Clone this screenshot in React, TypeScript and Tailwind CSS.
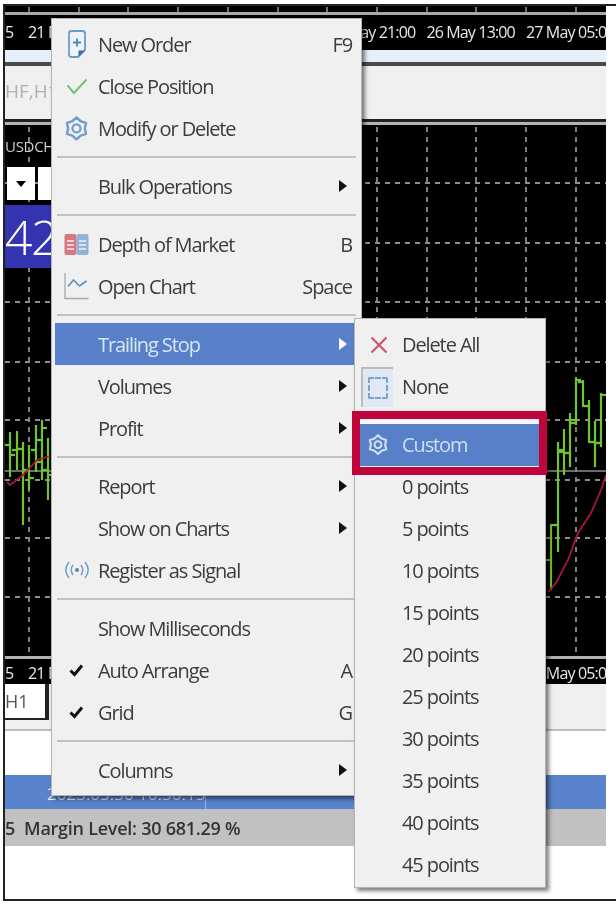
import type { ReactNode } from 'react'

const gridX = [29, 79, 128, 178, 228, 278, 327, 377, 427, 476, 526, 576]
const gridY = [183, 243, 302, 362, 420, 480, 538, 597]

// [x, top, bottom, open, close]
const bars = [
  [10, 432, 477, 445, 455],
  [17, 431, 470, 450, 449],
  [23, 442, 525, 449, 470],
  [29, 445, 490, 470, 478],
  [36, 425, 472, 450, 440],
  [42, 420, 480, 462, 428],
  [48, 438, 500, 470, 475],
  [551, 524, 590, 560, 525],
  [558, 442, 552, 525, 450],
  [564, 429, 475, 452, 453],
  [570, 413, 467, 453, 420],
  [576, 377, 425, 423, 380],
  [583, 380, 407, 382, 406],
  [589, 400, 443, 406, 442],
  [595, 421, 467, 442, 443],
  [601, 393, 447, 443, 395],
]

function Chart() {
  return (
    <svg viewBox="5 125 601 531" className="block h-full w-full">
      <rect x="5" y="125" width="601" height="531" fill="#000" />
      {gridX.map((x) => (
        <line key={x} x1={x} y1="127" x2={x} y2="656" stroke="#8d8d8d" strokeWidth="1.800" strokeDasharray="5 5" />
      ))}
      {gridY.map((y) => (
        <line key={y} x1="5" y1={y} x2="606" y2={y} stroke="#8d8d8d" strokeWidth="1.800" strokeDasharray="5 5" />
      ))}
      <line x1="5" y1="471" x2="606" y2="471" stroke="#8a8f96" strokeWidth="1.500" />
      {bars.map(([x, top, bottom, open, close]) => (
        <g key={x} stroke="#6fc42f" strokeWidth="2.200">
          <line x1={x} y1={top} x2={x} y2={bottom} />
          <line x1={x - 5} y1={open} x2={x} y2={open} />
          <line x1={x} y1={close} x2={x + 5} y2={close} />
        </g>
      ))}
      <polyline points="7,482 10,485 23,475 37,460 50,456" fill="none" stroke="#a8163a" strokeWidth="1.800" />
      <polyline points="548,592 556,583 568,560 578,533 591,513 601,490 606,475" fill="none" stroke="#a8163a" strokeWidth="1.800" />
    </svg>
  )
}

function TickStrip() {
  return (
    <svg viewBox="5 6 601 6" className="block h-[6px] w-[601px]">
      <rect x="5" y="6" width="601" height="6" fill="#000" />
      {gridX.map((x) => (
        <line key={x} x1={x} y1="7" x2={x} y2="12" stroke="#9a9a9a" strokeWidth="1.500" />
      ))}
    </svg>
  )
}

function TimeAxis({ className }: { className: string }) {
  return (
    <div className={`flex overflow-hidden bg-black font-['Open_Sans',sans-serif] text-[16px] leading-[20px] tracking-[-0.85px] whitespace-nowrap text-[#e8e8e8] ${className}`}>
      <span className="w-[23px] shrink-0">5</span>
      {['21 May 05:00', '24 May 13:00', '25 May 05:00', '25 May 21:00', '26 May 13:00', '27 May 05:00'].map((label) => (
        <span key={label} className="w-[99.6px] shrink-0">{label}</span>
      ))}
    </div>
  )
}

function NewOrderIcon() {
  return (
    <svg width="20" height="30" viewBox="0 0 20 30" fill="none">
      <path d="M2 4.500a2.500 2.500 0 0 1 2.500-2.500h11a2.500 2.500 0 0 1 2.500 2.500V21l-7 7H4.500a2.500 2.500 0 0 1-2.500-2.500Z" fill="#eef3fa" stroke="#6e9ac7" strokeWidth="1.800" />
      <path d="M18 21.500 11.500 28v-6.500Z" fill="#3e6fa8" />
      <path d="M10 9.500v8M6 13.500h8" stroke="#4f86bd" strokeWidth="1.800" />
    </svg>
  )
}

function CheckIcon() {
  return (
    <svg width="22" height="17" viewBox="0 0 22 17" fill="none">
      <path d="M1.500 7.500 8 15 20.500 1.500" stroke="#72c27b" strokeWidth="2" />
    </svg>
  )
}

function GearIcon({ color, size = 22 }: { color: string; size?: number }) {
  return (
    <svg width={size} height={(size * 26) / 22} viewBox="0 0 22 26" fill="none" className="overflow-visible">
      <path
        d="M11 1.500 15.350 5.470 21 7.250 19.700 13 21 18.750 15.350 20.530 11 24.500 6.650 20.530 1 18.750 2.300 13 1 7.250 6.650 5.470Z"
        stroke={color}
        strokeWidth="2.600"
        strokeLinejoin="round"
      />
      <circle cx="11" cy="13" r="4.200" stroke={color} strokeWidth="2.400" />
    </svg>
  )
}

function DepthIcon() {
  return (
    <svg width="25" height="23" viewBox="0 0 25 23">
      <rect x="0.500" y="1" width="12" height="21" rx="2" fill="#d9757f" />
      <rect x="12.500" y="1" width="12" height="21" rx="2" fill="#8fb4d6" />
      <path d="M3 8h7M3 12h7M3 16h7M15 8h7M15 12h7M15 16h7" stroke="#f4f4f4" strokeWidth="1.700" />
    </svg>
  )
}

function OpenChartIcon() {
  return (
    <svg width="25" height="28" viewBox="0 0 25 28" fill="none">
      <path d="M1 1v25.500h23.500" stroke="#a9a9a9" strokeWidth="1.300" />
      <path d="M4 14.500 9.500 8l6 6 7-5" stroke="#5f93c4" strokeWidth="1.700" />
    </svg>
  )
}

function SignalIcon() {
  return (
    <svg width="26" height="20" viewBox="0 0 26 20" fill="none" stroke="#6f9fca" strokeWidth="1.500">
      <path d="M5 2C1 7 1 13 5 18M21 2c4 5 4 11 0 16M9 5c-2.500 3.500-2.500 6.500 0 10M17 5c2.500 3.500 2.500 6.500 0 10" />
      <circle cx="13" cy="10" r="2" fill="#4f86bd" stroke="none" />
    </svg>
  )
}

function TickIcon() {
  return (
    <svg width="15" height="14" viewBox="0 0 15 14" fill="none">
      <path d="M1.500 7.500 5.500 11.500 13 2.500" stroke="#111" strokeWidth="3" />
    </svg>
  )
}

function CrossIcon() {
  return (
    <svg width="18" height="18" viewBox="0 0 18 18" fill="none">
      <path d="M1.500 1.500 16.500 16.500M16.500 1.500 1.500 16.500" stroke="#c9586a" strokeWidth="2.200" />
    </svg>
  )
}

function Arrow({ white }: { white?: boolean }) {
  return (
    <span className={`h-0 w-0 border-y-[6.500px] border-l-[8px] border-y-transparent ${white ? 'border-l-white' : 'border-l-[#111]'}`} />
  )
}

function Separator() {
  return (
    <div className="flex h-[16px] items-center px-[5px]">
      <div className="h-[2px] w-full bg-[#c2c2c2]" />
    </div>
  )
}

function Row({
  label,
  icon,
  shortcut,
  arrow,
  active,
}: {
  label: string
  icon?: ReactNode
  shortcut?: string
  arrow?: boolean
  active?: boolean
}) {
  return (
    <div className={`mx-[3px] flex h-[42px] items-center ${active ? 'bg-[#5880c8] text-[#d8e5f6]' : ''}`}>
      <span className="flex w-[43px] shrink-0 justify-center">{icon}</span>
      <span className="flex-1 pt-[1px]">{label}</span>
      {shortcut && <span className="pt-[1px] pr-[6px]">{shortcut}</span>}
      {arrow && <span className="flex pr-[11px]"><Arrow white={active} /></span>}
    </div>
  )
}

const points = ['0', '5', '10', '15', '20', '25', '30', '35', '40', '45']

export default function App() {
  return (
    <div className="relative h-[904px] w-[616px] overflow-hidden bg-white pt-[4px] pb-[3px] pl-[3px] blur-[0.7px]">
      <div className="flex h-full flex-col border-y-2 border-l-2 border-[#222]">
        <TickStrip />
        <div className="h-[3px] w-[601px] bg-[#a9a9a9]" />
        <TimeAxis className="h-[35px] w-[601px] pt-[7px]" />
        <div className="h-[12px] w-[601px] bg-[#e6f0fb]" />
        <div className="h-[4px] w-[601px] bg-[#4a4a4a]" />
        <div className="flex h-[53px] w-[601px] items-center bg-[#f0f0f0] pb-[2px] font-['Open_Sans',sans-serif] text-[19px] text-[#b0b0b0]">HF,H1</div>
        <div className="h-[3px] w-[601px] bg-[#222]" />
        <div className="h-[3px] w-[601px] bg-[#b5b5b5]" />
        <div className="relative h-[531px] w-[601px]">
          <Chart />
          <div className="absolute top-[10px] left-0 font-['Open_Sans',sans-serif] text-[15px] tracking-[-0.3px] text-[#d0d0d0]">USDCH</div>
          <div className="absolute top-[42px] left-[2px] flex h-[33px] w-[44px] gap-[3px]">
            <div className="flex w-[28px] items-center justify-center bg-white">
              <span className="h-0 w-0 border-x-[5px] border-t-[6px] border-x-transparent border-t-black" />
            </div>
            <div className="flex-1 bg-white" />
          </div>
          <div className="absolute top-[80px] left-0 flex h-[63px] w-[46px] items-center bg-[#3433b0] font-['Open_Sans',sans-serif] text-[48px] font-light tracking-[-1.500px] text-white">42</div>
        </div>
        <div className="h-[3px] w-[601px] bg-[#b0b0b0]" />
        <TimeAxis className="h-[25px] w-[601px] pt-[4px]" />
        <div className="flex h-[45px] w-[601px] items-start bg-[#f0f0f0]">
          <div className="flex h-[36px] w-[42px] items-center border-r-2 border-b-2 border-[#222] bg-white font-['Open_Sans',sans-serif] text-[18px] text-[#555]">H1</div>
          <div className="h-[36px] w-[3px] border-l-2 border-[#222]" />
        </div>
        <div className="h-[2px] w-[601px] bg-[#bdbdbd]" />
        <div className="h-[44px]" />
        <div className="flex h-[34px] w-[601px] bg-[#5a83cd]">
          <div className="w-[200px] pt-[7px] pl-[42px] font-['Open_Sans',sans-serif] text-[17px] leading-[24px] whitespace-nowrap text-[#dfe9f7]">2023.05.30 10:30:15</div>
          <div className="w-px bg-[#9cb6e0]" />
        </div>
        <div className="flex h-[37px] w-[601px] items-center gap-[9px] bg-[#c1c1c1] pt-[2px] font-['Open_Sans',sans-serif] text-[18px] font-semibold tracking-[-0.25px] text-[#333]">
          <span>5</span>
          <span>Margin Level: 30 681.29 %</span>
        </div>
      </div>

      <div className="absolute top-[18px] left-[51px] h-[778px] w-[311px] border border-[#b4b4b4] bg-[#f0f0f0] pt-[4px] font-['Open_Sans',sans-serif] text-[20px] tracking-[-1.100px] text-[#3c3c3c] shadow-[3px_3px_4px_rgba(0,0,0,0.5)]">
        <Row label="New Order" icon={<NewOrderIcon />} shortcut="F9" />
        <Row label="Close Position" icon={<CheckIcon />} />
        <Row label="Modify or Delete" icon={<GearIcon color="#6f9fca" size={21} />} />
        <Separator />
        <Row label="Bulk Operations" arrow />
        <Separator />
        <Row label="Depth of Market" icon={<DepthIcon />} shortcut="B" />
        <Row label="Open Chart" icon={<OpenChartIcon />} shortcut="Space" />
        <Separator />
        <Row label="Trailing Stop" arrow active />
        <Row label="Volumes" arrow />
        <Row label="Profit" arrow />
        <Separator />
        <Row label="Report" arrow />
        <Row label="Show on Charts" arrow />
        <Row label="Register as Signal" icon={<SignalIcon />} />
        <Separator />
        <Row label="Show Milliseconds" />
        <Row label="Auto Arrange" icon={<TickIcon />} shortcut="A" />
        <Row label="Grid" icon={<TickIcon />} shortcut="G" />
        <Separator />
        <Row label="Columns" arrow />
      </div>

      <div className="absolute top-[318px] left-[354px] h-[570px] w-[192px] border border-[#b4b4b4] bg-[#f0f0f0] pt-[5px] font-['Open_Sans',sans-serif] text-[20px] tracking-[-1.100px] text-[#3c3c3c] shadow-[3px_3px_4px_rgba(0,0,0,0.5)]">
        <div className="flex h-[42px] items-center">
          <span className="flex w-[47px] justify-center"><CrossIcon /></span>
          <span>Delete All</span>
        </div>
        <div className="flex h-[42px] items-center">
          <span className="ml-[6px] flex h-[40px] w-[32px] items-center justify-center border-t-2 border-l-2 border-[#bcbcbc] bg-[#dfe8f3]">
            <span className="h-[22px] w-[20px] rounded-[2px] border-2 border-dashed border-[#7ba3cc]" />
          </span>
          <span className="ml-[9px]">None</span>
        </div>
        <Separator />
        <div className="mx-[5px] flex h-[42px] items-center bg-[#5880c8] text-[#d0dff2] shadow-[0_-4px_0_#f6f6f6]">
          <span className="flex w-[36px] justify-center"><GearIcon color="#d0dff2" size={18} /></span>
          <span className="ml-[6px]">Custom</span>
        </div>
        {points.map((p) => (
          <div key={p} className="flex h-[42px] items-center pl-[47px]">{p} points</div>
        ))}
        <div className="absolute top-[92px] -left-[3px] h-[64px] w-[195px] border-[8px] border-[#c0043c]" />
      </div>
    </div>
  )
}
